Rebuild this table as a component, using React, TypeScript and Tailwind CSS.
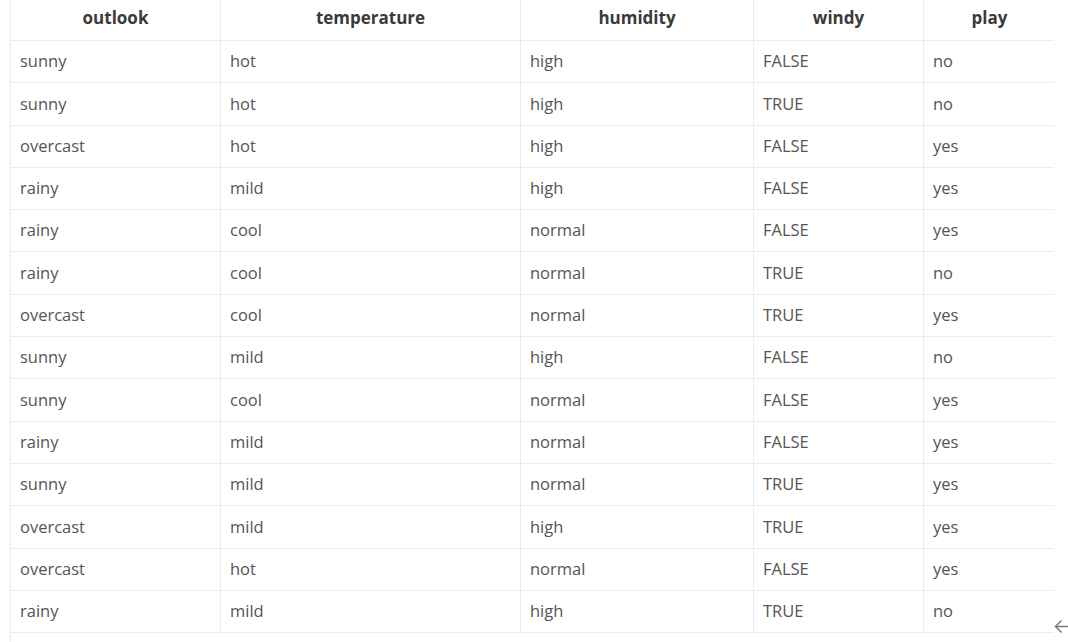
const columns = [
  { key: "outlook", width: "w-[210px]" },
  { key: "temperature", width: "w-[300px]" },
  { key: "humidity", width: "w-[233px]" },
  { key: "windy", width: "w-[170px]" },
  { key: "play", width: "w-[131px]" },
];

const rows = [
  ["sunny", "hot", "high", "FALSE", "no"],
  ["sunny", "hot", "high", "TRUE", "no"],
  ["overcast", "hot", "high", "FALSE", "yes"],
  ["rainy", "mild", "high", "FALSE", "yes"],
  ["rainy", "cool", "normal", "FALSE", "yes"],
  ["rainy", "cool", "normal", "TRUE", "no"],
  ["overcast", "cool", "normal", "TRUE", "yes"],
  ["sunny", "mild", "high", "FALSE", "no"],
  ["sunny", "cool", "normal", "FALSE", "yes"],
  ["rainy", "mild", "normal", "FALSE", "yes"],
  ["sunny", "mild", "normal", "TRUE", "yes"],
  ["overcast", "mild", "high", "TRUE", "yes"],
  ["overcast", "hot", "normal", "FALSE", "yes"],
  ["rainy", "mild", "high", "TRUE", "no"],
];

const App = () => {
  return (
    <div
      className="w-[1068px] h-[642px] overflow-hidden bg-white flex"
      style={{ fontFamily: '"Open Sans", "Noto Sans", sans-serif' }}
    >
      <div className="ml-[10px] w-[1044px] flex flex-col border-l border-[#ececec]">
        {/* header */}
        <div className="flex h-[41px] border-b border-[#ececec]">
          {columns.map((c, i) => (
            <div
              key={c.key}
              className={`${c.width} shrink-0 flex items-center justify-center pb-[5px] text-[17px] font-bold text-[#3a3a3a] ${i < columns.length - 1 ? "border-r border-[#ececec]" : ""}`}
            >
              {c.key}
            </div>
          ))}
        </div>

        {rows.map((row, r) => (
          <div key={r} className="flex h-[42.3px] border-b border-[#ececec]">
            {row.map((cell, i) => (
              <div
                key={i}
                className={`${columns[i].width} shrink-0 flex items-center pl-[9px] text-[16.5px] text-[#555] ${i < columns.length - 1 ? "border-r border-[#ececec]" : ""}`}
              >
                {cell}
              </div>
            ))}
          </div>
        ))}
      </div>

      <div className="flex-1 flex items-end pb-[8px]">
        <svg width="14" height="15" viewBox="0 0 14 15" fill="none" stroke="#7a7a7a" strokeWidth="1.5">
          <path d="M14 7.5H1.5" />
          <path d="M7.5 1.5L1.5 7.5l6 6" />
        </svg>
      </div>
    </div>
  );
};

export default App;
